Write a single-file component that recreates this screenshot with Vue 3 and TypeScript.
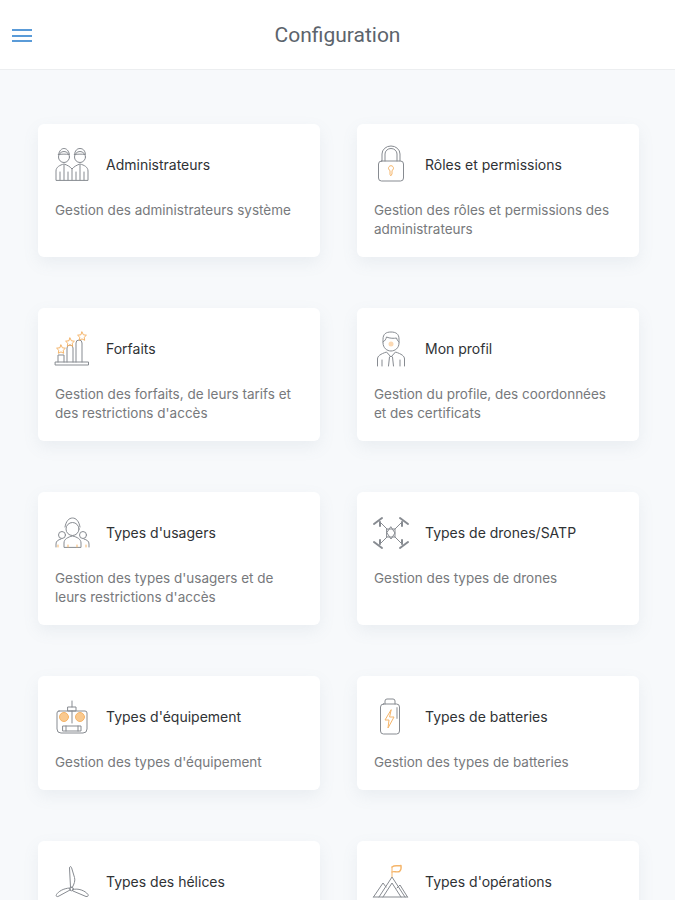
<script setup lang="ts">
interface ConfigCard {
  icon: string
  title: string
  text: string
}

const cards: ConfigCard[] = [
  { icon: 'admins', title: 'Administrateurs', text: 'Gestion des administrateurs système' },
  { icon: 'lock', title: 'Rôles et permissions', text: 'Gestion des rôles et permissions des administrateurs' },
  { icon: 'plans', title: 'Forfaits', text: 'Gestion des forfaits, de leurs tarifs et des restrictions d\'accès' },
  { icon: 'profile', title: 'Mon profil', text: 'Gestion du profile, des coordonnées et des certificats' },
  { icon: 'users', title: 'Types d\'usagers', text: 'Gestion des types d\'usagers et de leurs restrictions d\'accès' },
  { icon: 'drone', title: 'Types de drones/SATP', text: 'Gestion des types de drones' },
  { icon: 'remote', title: 'Types d\'équipement', text: 'Gestion des types d\'équipement' },
  { icon: 'battery', title: 'Types de batteries', text: 'Gestion des types de batteries' },
  { icon: 'propeller', title: 'Types des hélices', text: 'Gestion des types des hélices' },
  { icon: 'flag', title: 'Types d\'opérations', text: 'Gestion des types d\'opérations' }
]
</script>

<template>
  <div class="page">
    <header class="topbar">
      <button class="menu" aria-label="Menu">
        <span></span>
        <span></span>
        <span></span>
      </button>
      <h1>Configuration</h1>
    </header>

    <main class="grid">
      <article v-for="card in cards" :key="card.title" class="card">
        <div class="card-head">
          <svg class="icon" viewBox="0 0 40 40" width="40" height="40" fill="none" stroke="#878b91" stroke-width="1" stroke-linecap="round" stroke-linejoin="round">
            <g v-if="card.icon === 'admins'">
              <circle cx="9" cy="13" r="5.5" />
              <path d="M3.5 10.5c1-4 3-6 5.500-6s4.500 2 5.500 6c-3.500-.5-7.500-.5-11 0z" />
              <circle cx="25" cy="13" r="5.500" />
              <path d="M19.500 10.500c.5-4 2.500-6 5.500-6s5 2 5.500 6c-3.500-.5-7.500-.5-11 0z" />
              <path d="M1 36v-9c0-4 4-6 8-7 3 1 6 2.500 8 5 2-2.500 5-4 8-5 4 1 8 3 8 7v9z" />
              <path d="M5 28v8M13 28v8M9 21v15M21 28v8M29 28v8M25 21v15M17 25v11" />
            </g>
            <g v-else-if="card.icon === 'lock'">
              <path d="M8 17V10a9 8 0 0 1 18 0v7M11 17V10a6 5.500 0 0 1 12 0v7" />
              <rect x="4.500" y="17" width="25" height="20" rx="3" />
              <path d="M16 30v-3.500a2.500 2.500 0 1 1 2 0V30l-1 1.500z" stroke="#f5b56a" />
            </g>
            <g v-else-if="card.icon === 'plans'">
              <path d="M0.500 37h33v-3h-33zM3 34v-7h6v7M12 34V20a3 3 0 0 1 6 0v14M21 34V15a3 3 0 0 1 6 0v19" />
              <path d="M6 17l1.400 2.800 3 .4-2.200 2.100.5 3L6 23.900l-2.700 1.400.5-3-2.200-2.100 3-.4zM15 10l1.400 2.800 3 .4-2.200 2.100.5 3-2.700-1.400-2.700 1.400.5-3-2.200-2.100 3-.4zM27 4l1.400 2.800 3 .4-2.200 2.100.5 3-2.700-1.400-2.700 1.400.5-3-2.200-2.100 3-.4z" stroke="#f5b56a" />
            </g>
            <g v-else-if="card.icon === 'profile'">
              <path d="M9 11c0-5 3-7 8-7s8 2 8 7v4c0 5-4 8-8 8s-8-3-8-8z" />
              <path d="M9 14c2-1 3-3 3.500-5 3 1.500 8 1.500 10 1 .5 1.500 1 3 2.500 4" />
              <circle cx="17" cy="16" r="2.500" fill="#fbd9b4" stroke="none" />
              <path d="M3.500 38v-7c0-3 3-5 9-7l4.500 5 4.500-5c6 2 9 4 9 7v7M8 38v-6M26 38v-6M15.500 29l-1 9M18.500 29l1 9" />
            </g>
            <g v-else-if="card.icon === 'users'">
              <circle cx="17.500" cy="17" r="6.500" />
              <path d="M10 15c1-6 4-9 7.500-9s6.500 3 7.500 9" />
              <circle cx="7" cy="23" r="3.500" />
              <circle cx="28" cy="23" r="3.500" />
              <path d="M1 35v-3c0-3 2-4 5-5M34 35v-3c0-3-2-4-5-5M9 35v-4c0-4 4-6 8.500-7 4.500 1 8.500 3 8.500 7v4z" />
              <path d="M3 33v2M13 33v2M22 33v2M31 33v2" stroke="#f5b56a" />
            </g>
            <g v-else-if="card.icon === 'drone'">
              <path d="M13 17L6 10M21 17l7-7M13 25l-7 7M21 25l7 7M13 17h8v8h-8zM17 15l4 6-4 6-4-6z" />
              <path d="M0 12l8-6M26 6l8 6M0 30l8 6M26 36l8-6" stroke-width="2" />
              <path d="M6 10v4M28 10v4M6 32v-4M28 32v-4" stroke-width="2" />
            </g>
            <g v-else-if="card.icon === 'remote'">
              <path d="M17 5v6M13 11h8v4h-8zM4 15h26a2 2 0 0 1 2 2v16a4 4 0 0 1-4 4H6a4 4 0 0 1-4-4V17a2 2 0 0 1 2-2z" />
              <circle cx="9" cy="21" r="4.500" fill="#f9c98f" stroke="#f5b56a" />
              <circle cx="25" cy="21" r="4.500" fill="#f9c98f" stroke="#f5b56a" />
              <path d="M17 15v12M8 30h18v5H8zM11 30v5M23 30v5" />
            </g>
            <g v-else-if="card.icon === 'battery'">
              <path d="M11 8V5a2 2 0 0 1 2-2h6a2 2 0 0 1 2 2v3" />
              <rect x="6.500" y="8" width="19" height="30" rx="3" />
              <path d="M23 12v10" stroke="#c4c6c9" stroke-width="2" />
              <path d="M17 14l-6 10h4l-1 8 6-11h-4z" stroke="#f5b56a" />
            </g>
            <g v-else-if="card.icon === 'propeller'">
              <circle cx="16.500" cy="28" r="1.800" />
              <path d="M15.500 26L14.500 7c0-1.500 1.500-2 2-.5l3 10c1 3-.5 7-2 9.500z" />
              <path d="M15 29L4 35c-2 1.300-3.500.3-2.500-1.500 2-3 6.500-6 13-6.500z" />
              <path d="M18 28.500c5-1.500 12 1 15 5 .8 1.300-.3 2.300-2 2L18 30z" />
            </g>
            <g v-else-if="card.icon === 'flag'">
              <path d="M18 16v-10" stroke="#f5b56a" />
              <path d="M18 6c3-2.500 6-.5 9-1.500.5 3-.5 5-1.500 6-3 1.200-5.500-.6-7.500.5" stroke="#f5b56a" stroke-width="1.400" />
              <path d="M-0.500 36L9 22l3 4M33.500 36L26 24l-3 3M5 36l13-20 13 20M9 36l9-14 9 14M-0.500 36h34" />
            </g>
          </svg>
          <h2>{{ card.title }}</h2>
        </div>
        <p>{{ card.text }}</p>
      </article>
    </main>
  </div>
</template>

<style scoped>
.page {
  height: 900px;
  overflow: hidden;
  background: #f7f9fb;
  font-family: 'Inter', 'Open Sans', sans-serif;
}

.topbar {
  position: relative;
  display: flex;
  align-items: center;
  justify-content: center;
  height: 69px;
  background: #fff;
  border-bottom: 1px solid #eceef0;
}

.menu {
  position: absolute;
  left: 12px;
  top: 29px;
  display: flex;
  flex-direction: column;
  gap: 3.500px;
  width: 20px;
  padding: 0;
  border: none;
  background: none;
}

.menu span {
  display: block;
  height: 2px;
  background: #5a9bd8;
}

.topbar h1 {
  margin: 0;
  font-family: 'Roboto', sans-serif;
  font-size: 21px;
  font-weight: 400;
  color: #5c646c;
}

.grid {
  display: grid;
  grid-template-columns: 282px 282px;
  column-gap: 37px;
  row-gap: 51px;
  padding: 54px 37px 0 38px;
}

.card {
  padding: 20px 17px 18px;
  background: #fff;
  border-radius: 6px;
  box-shadow: 0 6px 16px rgba(120, 135, 155, 0.1);
}

.card-head {
  display: flex;
  align-items: center;
  gap: 11px;
  height: 40px;
}

.icon {
  flex: none;
  overflow: visible;
}

.card-head h2 {
  margin: 0;
  font-size: 14px;
  font-weight: 400;
  color: #2f3235;
}

.card p {
  margin: 17px 0 0;
  font-size: 13.500px;
  line-height: 19px;
  color: #77797c;
}
</style>

<style>
body {
  background: #f7f9fb;
}
</style>
